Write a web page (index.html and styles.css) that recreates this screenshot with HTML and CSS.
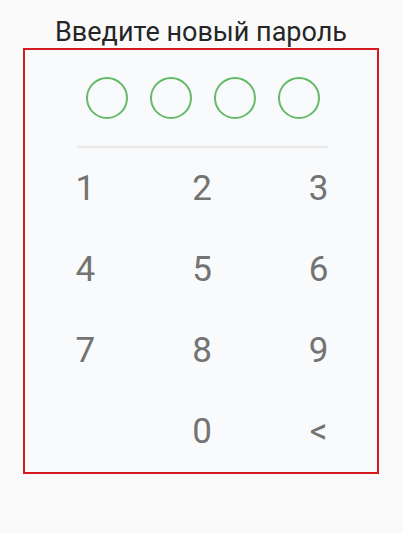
FILE: index.html
```html
<!DOCTYPE html>
<html lang="ru">
<head>
    <meta charset="UTF-8">
    <meta name="viewport" content="width=device-width, initial-scale=1.0">
    <title>Новый пароль</title>
    <link rel="stylesheet" href="styles.css">
</head>
<body>
    <div class="screen">
        <h1 class="title">Введите новый пароль</h1>

        <!-- PIN pad -->
        <div class="pin-box">
            <div class="dots">
                <span class="dot"></span>
                <span class="dot"></span>
                <span class="dot"></span>
                <span class="dot"></span>
            </div>
            <div class="divider"></div>
            <div class="keys">
                <button class="key">1</button>
                <button class="key">2</button>
                <button class="key">3</button>
                <button class="key">4</button>
                <button class="key">5</button>
                <button class="key">6</button>
                <button class="key">7</button>
                <button class="key">8</button>
                <button class="key">9</button>
                <span class="key empty"></span>
                <button class="key">0</button>
                <button class="key back">&lt;</button>
            </div>
        </div>
    </div>
</body>
</html>
```

FILE: styles.css
```css
body {
    margin: 0;
    background-color: #fafafa;
    font-family: Roboto, "Noto Sans", sans-serif;
}

.screen {
    padding: 0 24px 0 23px;
}

.title {
    margin: 0;
    padding-top: 16px;
    height: 32px;
    font-size: 27px;
    font-weight: 400;
    line-height: 32px;
    color: #262626;
    text-align: center;
}

.pin-box {
    border: 2px solid #d71920;
    background-color: #f9fafb;
    height: 426px;
    box-sizing: border-box;
    overflow: hidden;
}

.dots {
    display: flex;
    justify-content: center;
    gap: 22px;
    padding: 27px 0 0 3px;
}

.dot {
    width: 38px;
    height: 38px;
    border: 2px solid #64ba68;
    border-radius: 50%;
}

.divider {
    height: 1.5px;
    background-color: #e9e9e9;
    margin: 27px 49px 0 52px;
}

.keys {
    display: grid;
    grid-template-columns: repeat(3, 1fr);
    grid-auto-rows: 81px;
    padding-left: 2px;
}

.key {
    border: none;
    background: none;
    padding: 0;
    font-family: Roboto, "Noto Sans", sans-serif;
    font-size: 35px;
    color: #737373;
    display: flex;
    align-items: center;
    justify-content: center;
}
```
